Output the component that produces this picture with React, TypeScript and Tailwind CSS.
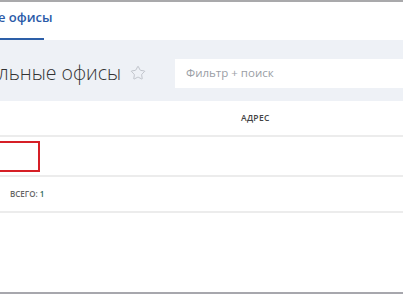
import { Star } from 'lucide-react'

const font = { fontFamily: '"Open Sans", "Noto Sans", sans-serif' }

export default function App() {
  return (
    <div className="flex h-[294px] w-[403px] flex-col overflow-hidden bg-white" style={font}>
      <div className="h-[2px] bg-[#a9a9ab]" />

      {/* вкладки */}
      <div className="flex h-[38px] bg-white">
        <div className="flex w-[44px] flex-col justify-between border-b-2 border-[#2d5fa8] pt-[7px]">
          <span className="-ml-[2px] whitespace-nowrap text-[13px] font-semibold leading-[16px] text-[#2a5aa8]">
            е офисы
          </span>
        </div>
      </div>

      {/* заголовок + поиск */}
      <div className="flex h-[61px] items-center justify-between bg-[#eef1f6] pt-[5px]">
        <div className="flex items-center gap-[9px]">
          <span className="-ml-[2px] whitespace-nowrap text-[19.5px] font-light leading-[24px] text-[#333]">
            льные офисы
          </span>
          <Star className="h-[16px] w-[16px] text-[#b5b9c0]" strokeWidth={1.2} />
        </div>
        <div className="flex h-[29px] w-[228px] items-center bg-white pl-[11px] text-[11.5px] text-[#9a9ea5]">
          Фильтр + поиск
        </div>
      </div>

      {/* шапка таблицы */}
      <div className="flex h-[36px] items-center border-b-2 border-[#ececec] pl-[241px]">
        <span className="text-[8.5px] font-semibold tracking-[0.3px] text-[#444]">АДРЕС</span>
      </div>

      {/* строка */}
      <div className="flex h-[40px] items-center border-b-2 border-[#ececec]">
        <div className="h-[31px] w-[40px] border-2 border-l-0 border-[#d61f26]" />
      </div>

      {/* итого */}
      <div className="flex h-[36px] items-center border-b-2 border-[#ececec] pl-[10px]">
        <span className="text-[8px] font-semibold text-[#666]">
          ВСЕГО: <span className="text-[#2a6b5a]">1</span>
        </span>
      </div>

      <div className="flex-1" />
      <div className="h-[2px] bg-[#a7a7ad]" />
    </div>
  )
}
